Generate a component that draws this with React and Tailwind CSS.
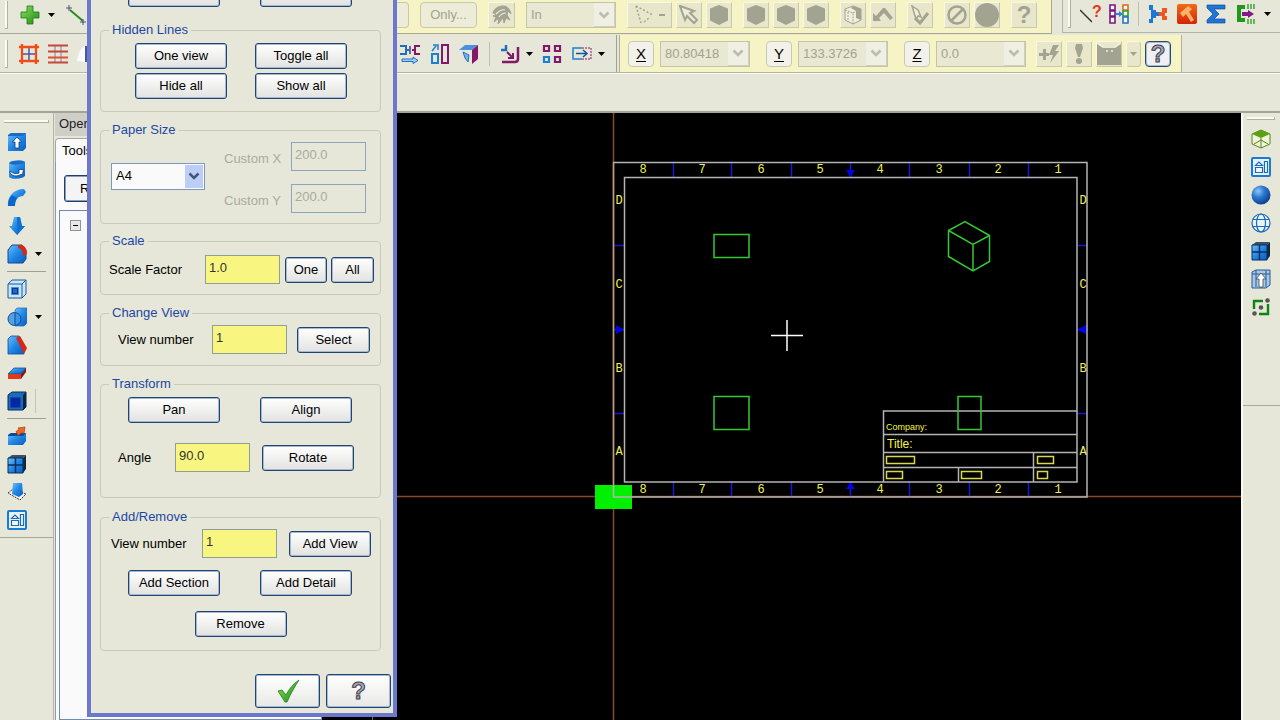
import React, { useState } from "react";

const Icon = ({ children }) => (
  <svg viewBox="0 0 20 20" className="block h-5 w-5 shrink-0">
    {children}
  </svg>
);

const Caret = () => (
  <svg viewBox="0 0 7 4" className="block h-1 w-[7px] shrink-0">
    <path d="M0 0h7L3.5 4z" fill="#000" />
  </svg>
);

const Chevron = ({ color }) => (
  <svg viewBox="0 0 12 8" className="h-2 w-3">
    <path d="M1.500 1.500 6 6l4.500-4.500" fill="none" stroke={color} strokeWidth="2.500" />
  </svg>
);

const QuestionMark = ({ className }) => (
  <span className={`text-2xl leading-6 font-bold ${className}`}>?</span>
);

const ToolButton = ({ label, children, className = "" }) => (
  <button type="button" aria-label={label} className={`flex shrink-0 items-center ${className}`}>
    {children}
  </button>
);

/* ---------- Icons shared by several toolbars ---------- */

const Defs = () => (
  <svg className="absolute h-0 w-0" aria-hidden="true">
    <defs>
      <linearGradient id="blue" x1="0" y1="0" x2="1" y2="1">
        <stop offset="0" stopColor="#6cc0f8" />
        <stop offset="0.5" stopColor="#1f86e4" />
        <stop offset="1" stopColor="#0a5cc0" />
      </linearGradient>
      <radialGradient id="ball" cx="0.35" cy="0.3" r="0.75">
        <stop offset="0" stopColor="#8cc8f8" />
        <stop offset="0.45" stopColor="#2a78d0" />
        <stop offset="1" stopColor="#0b3c88" />
      </radialGradient>
      <linearGradient id="green" x1="0" y1="0" x2="1" y2="1">
        <stop offset="0" stopColor="#8ae060" />
        <stop offset="1" stopColor="#1c8a14" />
      </linearGradient>
      <linearGradient id="fire" x1="0" y1="0" x2="0" y2="1">
        <stop offset="0" stopColor="#f06a18" />
        <stop offset="1" stopColor="#d42408" />
      </linearGradient>
    </defs>
  </svg>
);

const GridCube = () => (
  <Icon>
    <path d="M1 4 5 1h14l-3 3z" fill="#3a5064" />
    <path d="M16 4l3-3v14l-3 4z" fill="#12283c" />
    <path d="M1 4h15v15H1z" fill="url(#blue)" stroke="#0b2c5c" />
    <path d="M8.500 4v15M1 11h15" stroke="#0b2c5c" strokeWidth="1.500" />
  </Icon>
);

const LayoutIcon = () => (
  <Icon>
    <rect x="1" y="1" width="18" height="18" rx="1" fill="#e4f2fc" stroke="#1c7ad0" strokeWidth="2" />
    <path d="M4.500 10.500h7v5h-7zM13.500 4.500h3v11h-3zM4.500 8.500 8 5l3.500 3.500z" fill="#f4fafe" stroke="#1c6ab8" strokeWidth="1.200" />
  </Icon>
);

/* ---------- Left toolbar ---------- */

const ExtrudeIcon = () => (
  <Icon>
    <path d="M1 3l3-2h15v15l-3 3H1z" fill="url(#blue)" />
    <path d="M1 3l3-2h15l-3 3H1z" fill="#1a6cc8" />
    <path d="M10 5 5.500 10H8v6h4v-6h2.500z" fill="#fff" stroke="#0c3c78" strokeWidth="0.800" />
  </Icon>
);

const RevolveIcon = () => (
  <Icon>
    <path d="M2 3c3-3 13-3 16-1v14c-3 3-14 4-16 1z" fill="url(#blue)" />
    <path d="M2 3c3-3 13-3 16-1-3 3-13 4-16 1z" fill="#1a6cc8" />
    <path d="M3 11c3 3 7 3 9 2V9.500l4.500 0-1 5-2 0C10 17 5 16 3 13z" fill="#fff" stroke="#0c3c78" strokeWidth="0.800" />
  </Icon>
);

const SweepIcon = () => (
  <Icon>
    <path d="M1 18C0 9 6 1 17 1l2 3-3 4c-5 0-8 4-8 10H1z" fill="url(#blue)" />
    <path d="M1 18c0-4 1-8 4-11l5 3c-2 2-2 5-2 8z" fill="#0a66c8" />
  </Icon>
);

const LoftIcon = () => (
  <Icon>
    <path d="M7 1h6l2 9h3l-8 9-8-9h3z" fill="url(#blue)" />
    <path d="M10 1h3l2 9h3l-8 9z" fill="#0d72d0" />
  </Icon>
);

const FilletIcon = () => (
  <Icon>
    <path d="M1 6l4-5h10l4 5v9l-3 4H1z" fill="url(#blue)" stroke="#0b4c9c" />
    <path d="M11 1h4c3 1 5 4 5 9l-4 2c0-4-1-7-5-8z" fill="#d42818" />
  </Icon>
);

const ShellIcon = () => (
  <Icon>
    <path d="M1 5l4-4h14v14l-4 4H1z" fill="#c8e6fa" stroke="#1c5a9c" />
    <path d="M1 5h14v14M15 5l4-4" fill="none" stroke="#1c5a9c" />
    <path d="M4.500 8.500h7v7h-7z" fill="#0c3c88" stroke="#4a90d8" />
    <path d="M6 10h4v4H6z" fill="#1c6ad0" />
  </Icon>
);

const BooleanIcon = () => (
  <Icon>
    <path d="M8 3l2-2h10v15l-3 3H8z" fill="url(#blue)" stroke="#1c6ab8" strokeWidth="0.700" />
    <circle cx="7.500" cy="12" r="6.500" fill="#3a94e4" fillOpacity="0.850" stroke="#0b4c9c" />
    <path d="M8 6v12" stroke="#0b4c9c" />
  </Icon>
);

const DraftIcon = () => (
  <Icon>
    <path d="M1 4l3-3h8l5 18H1z" fill="url(#blue)" stroke="#0b4c9c" strokeWidth="0.800" />
    <path d="M9 3l4-2 7 12-3 6z" fill="#d42818" />
  </Icon>
);

const TrimIcon = () => (
  <Icon>
    <path d="M1 11l6-6h12l-5 6z" fill="url(#blue)" stroke="#0b3c78" strokeWidth="0.700" />
    <path d="M1 11h13v5H1z" fill="#e03a1c" />
    <path d="M14 11l5-6v4l-5 7z" fill="#7c1c28" />
  </Icon>
);

const SolidIcon = () => (
  <Icon>
    <path d="M1 4l4-3h14v15l-3 3H1z" fill="#1c6ab8" stroke="#0b2c5c" />
    <path d="M16 4l3-3v15l-3 3z" fill="#0b2440" />
    <path d="M3.500 6.500h10v10h-10z" fill="#0628a4" />
  </Icon>
);

const ImportIcon = () => (
  <Icon>
    <path d="M1 9l3-2h15v8l-3 4H1z" fill="url(#blue)" />
    <path d="M1 9l3-2h15l-3 3H1z" fill="#0c4c94" />
    <path d="M18 1l-7 1 1 1.500-3 2 2 4 4-3 2 1z" fill="#f06820" stroke="#b03c10" strokeWidth="0.700" />
  </Icon>
);

const SheetIcon = () => (
  <Icon>
    <path d="M1 11l5-4 13 5-6 6z" fill="#f4f4f4" stroke="#333" strokeDasharray="2 1" />
    <path d="M6 1h9l1 11-4 3-7-3z" fill="url(#blue)" />
  </Icon>
);

const leftTools = [
  [
    { label: "Extrude", icon: <ExtrudeIcon /> },
    { label: "Revolve", icon: <RevolveIcon /> },
    { label: "Sweep", icon: <SweepIcon /> },
    { label: "Loft", icon: <LoftIcon /> },
    { label: "Fillet", icon: <FilletIcon />, menu: true },
  ],
  [
    { label: "Shell", icon: <ShellIcon /> },
    { label: "Boolean", icon: <BooleanIcon />, menu: true },
    { label: "Draft", icon: <DraftIcon /> },
    { label: "Trim", icon: <TrimIcon /> },
    { label: "Solid", icon: <SolidIcon /> },
  ],
  [
    { label: "Import", icon: <ImportIcon /> },
    { label: "Grid cube", icon: <GridCube /> },
    { label: "Sheet", icon: <SheetIcon /> },
    { label: "Layout", icon: <LayoutIcon /> },
  ],
];

const LeftToolbar = () => (
  <nav className="w-[54px] shrink-0 border-r border-[#b4b4a4]">
    <div className="flex flex-col border-b border-[#a8a898] pt-[7px] pb-[3px]">
      <div className="mx-1 mb-[5px] h-[3px] border-r border-b border-[#b0b09c] bg-[#fafaf0]" />
      {leftTools.map((group, index) => (
        <div key={index} className="flex flex-col">
          {index > 0 && <div className="mx-[7px] my-[3px] h-px bg-[#a0a090]" />}
          {group.map((tool) => (
            <ToolButton key={tool.label} label={tool.label} className="h-7 gap-2 pl-[7px]">
              {tool.icon}
              {tool.menu && <Caret />}
              {tool.label === "Solid" && <span className="h-6 w-px bg-[#c4c4b0]" />}
            </ToolButton>
          ))}
        </div>
      ))}
    </div>
  </nav>
);

/* ---------- Right toolbar ---------- */

const rightTools = [
  {
    label: "Isometric",
    icon: (
      <Icon>
        <path d="M1 5l9-4 9 4v10l-9 4-9-4z" fill="#f0f4dc" stroke="#5c8418" />
        <path d="M1 5l9-4 9 4-9 4z" fill="#5ca014" />
        <path d="M10 9v10M3 15l7-4 7 4" fill="none" stroke="#5c8418" />
      </Icon>
    ),
  },
  { label: "View layout", icon: <LayoutIcon /> },
  {
    label: "Shaded",
    icon: (
      <Icon>
        <circle cx="10" cy="10" r="9.500" fill="url(#ball)" />
      </Icon>
    ),
  },
  {
    label: "Wireframe",
    icon: (
      <Icon>
        <g fill="none" stroke="#1c6ab8" strokeWidth="1.200">
          <circle cx="10" cy="10" r="9" fill="#e8f4fc" />
          <ellipse cx="10" cy="10" rx="4.500" ry="9" />
          <path d="M2 6.500h16M1.500 13.500h17" />
        </g>
      </Icon>
    ),
  },
  { label: "Solid cube", icon: <GridCube /> },
  {
    label: "Raise",
    icon: (
      <Icon>
        <path d="M1 3l4-2h14v15l-4 3H1z" fill="#a4c8e8" stroke="#2c5c94" />
        <path d="M5 1v17M15 1v17M1 5h18" stroke="#2c5c94" />
        <path d="M10 4 5 10h3v8h4v-8h3z" fill="#fff" stroke="#444" strokeWidth="0.800" />
      </Icon>
    ),
  },
  {
    label: "Fit",
    icon: (
      <Icon>
        <path d="M3 12V4h9M17 7v10H8" fill="none" stroke="#0c8414" strokeWidth="2.400" />
        <circle cx="10" cy="10.500" r="2.300" fill="#555" />
        <circle cx="16.500" cy="3.500" r="2.300" fill="#555" />
        <circle cx="3.500" cy="16.500" r="2.300" fill="#555" />
      </Icon>
    ),
  },
];

const RightToolbar = () => (
  <nav className="w-[39px] shrink-0 border-l-2 border-[#fafaf2]">
    <div className="flex h-[293px] flex-col items-center border-b border-[#a8a898] pt-1 pr-[2px]">
      <div className="mb-[5px] h-[3px] w-7 border-r border-b border-[#b0b09c] bg-[#fafaf0]" />
      {rightTools.map((tool) => (
        <ToolButton key={tool.label} label={tool.label} className="h-7">
          {tool.icon}
        </ToolButton>
      ))}
    </div>
  </nav>
);

/* ---------- Top toolbars ---------- */

const Grip = () => <div className="h-7 w-[3px] shrink-0 border-r border-b border-[#b0b09c] bg-[#fafaf0]" />;

const Separator = () => <div className="h-6 w-px shrink-0 bg-[#c0c0ac]" />;

const GhostButton = ({ label, children, className = "w-[26px]" }) => (
  <button
    type="button"
    disabled
    aria-label={label}
    className={`flex h-[26px] shrink-0 items-center justify-center border border-r-[#c8c8aa] border-b-[#c8c8aa] border-t-[#f8f8e4] border-l-[#f8f8e4] bg-[#e8e7cc] text-[#a2a390] ${className}`}
  >
    {children}
  </button>
);

const GhostSelect = ({ label, value }) => (
  <div className="relative h-[26px] w-[90px] shrink-0">
    <select
      disabled
      aria-label={label}
      className="h-full w-full appearance-none border border-[#c4c4a8] bg-[#e9e8d2] pl-1 text-[13px] text-[#a2a390] opacity-100"
    >
      <option>{value}</option>
    </select>
    <span className="pointer-events-none absolute top-px right-px flex h-6 w-[21px] items-center justify-center border-r border-b border-[#d0d0bc] bg-[#efefe4]">
      <Chevron color="#bcbcaa" />
    </span>
  </div>
);

const AxisButton = ({ axis }) => (
  <button
    type="button"
    className="h-[26px] w-[26px] shrink-0 rounded-sm border border-[#c8c8b4] bg-[#f2f2ea] text-[15px] leading-5 text-black underline underline-offset-2"
  >
    {axis}
  </button>
);

const GhostHex = () => (
  <Icon>
    <path d="M10 0l9 3.500v12L10 20l-9-4.500v-12z" fill="currentColor" />
  </Icon>
);

const SelectionBar = () => (
  <div className="flex h-[34px] shrink-0 items-start gap-[11px] border-r border-b border-[#a8a890] bg-[#f6f4c4] pt-[2px] pr-[14px]">
    <div className="h-[26px] w-3 rounded-r-sm border border-l-0 border-[#c8c8aa] bg-[#edecd8]" />
    <button
      type="button"
      disabled
      className="h-[26px] w-[57px] rounded-sm border border-[#c8c8aa] bg-[#edecd8] text-[13px] text-[#a2a390]"
    >
      Only...
    </button>
    <GhostButton label="Mask" className="w-[27px]">
      <Icon>
        <path
          d="M1 8c1-4 5-7 10-7 4 0 7 3 8 8l-3-3-1 4 3 5-4-2-2 5-1-5-5 6 1-6-5 4 2-5-3-1 4-2z"
          fill="currentColor"
          stroke="currentColor"
        />
        <path d="M4 9c4-4 6-5 9-4M7 12c2-3 4-4 7-4" fill="none" stroke="#eeeeda" strokeWidth="1.200" />
      </Icon>
    </GhostButton>
    <GhostSelect label="Selection window" value="In" />
    <div className="flex gap-1">
      <GhostButton label="Polygon" className="w-[45px] gap-1">
        <Icon>
          <path d="M1 1l5 17M1 1l17 9M9 17l5-4" fill="none" stroke="currentColor" strokeWidth="1.500" strokeDasharray="2 2" />
        </Icon>
        <span className="h-[2px] w-[6px] bg-[#a2a390]" />
      </GhostButton>
      <GhostButton label="Pointer">
        <Icon>
          <path d="M1 1l14 5-4 2 7 7-3 3-7-7-2 4z" fill="#eeeeda" stroke="currentColor" strokeWidth="2" />
        </Icon>
      </GhostButton>
      <GhostButton label="Solid face">
        <GhostHex />
      </GhostButton>
    </div>
    <div className="flex gap-1">
      <GhostButton label="Edge">
        <GhostHex />
      </GhostButton>
      <GhostButton label="Face">
        <GhostHex />
      </GhostButton>
      <GhostButton label="Body">
        <GhostHex />
      </GhostButton>
    </div>
    <div className="flex gap-1">
      <GhostButton label="From back">
        <Icon>
          <path d="M10 1l8 3v11l-8 4-8-4V4z" fill="#f0f0dc" stroke="currentColor" />
          <path d="M10 1l8 3v11l-5-2V6L8 3z" fill="currentColor" />
          <path d="M2 5l8 3v11M10 8l4-2M5 7v10" fill="none" stroke="currentColor" strokeDasharray="2 1" />
        </Icon>
      </GhostButton>
      <GhostButton label="Select last">
        <Icon>
          <path d="M0 8v8h8l-2-3 5-5 6 7 3-2-8-10h-2L3 11z" fill="currentColor" />
        </Icon>
      </GhostButton>
    </div>
    <GhostButton label="Verify">
      <Icon>
        <path d="M2 1l6 4 3 7-3-1-2 3z" fill="#f0f0dc" stroke="currentColor" strokeWidth="1.500" />
        <path d="M5 13l5 5 8-10" fill="none" stroke="currentColor" strokeWidth="3" />
      </Icon>
    </GhostButton>
    <div className="flex gap-1">
      <GhostButton label="Unselect">
        <Icon>
          <circle cx="10" cy="10" r="8.500" fill="none" stroke="currentColor" strokeWidth="2.500" />
          <path d="M4 16 16 4" stroke="currentColor" strokeWidth="2.500" />
        </Icon>
      </GhostButton>
      <GhostButton label="End selection">
        <svg viewBox="0 0 24 24" className="h-6 w-6 shrink-0">
          <circle cx="12" cy="12" r="12" fill="currentColor" />
        </svg>
      </GhostButton>
    </div>
    <GhostButton label="Selection help">
      <QuestionMark className="text-[#a2a390]" />
    </GhostButton>
  </div>
);

const AnalyzeBar = () => (
  <div className="ml-[10px] flex h-[33px] grow items-center gap-[9px] border-b border-l border-[#b4b4a4] pb-1 pl-[5px]">
    <Grip />
    <ToolButton label="Analyze entity">
      <svg viewBox="0 0 12 20" className="h-5 w-3">
        <path d="M0 6l12 12" stroke="#333" strokeWidth="1.500" />
      </svg>
      <span className="w-2 pb-1 text-base leading-4 font-bold text-[#e03818]">?</span>
    </ToolButton>
    <ToolButton label="Change attributes">
      <Icon>
        <g fill="#fff" strokeWidth="1.600">
          <path d="M1 1h5v5H1zM1 7h5v5H1zM1 13h5v6H1z" stroke="#7c1480" />
          <path d="M14 1h5v5h-5z" stroke="#e06818" />
          <path d="M14 7h5v5h-5z" stroke="#20a030" />
          <path d="M14 13h5v6h-5z" stroke="#2070d0" />
        </g>
        <path d="M7 9h3V7l4 3-4 3v-2H7z" fill="#2c80d8" />
      </Icon>
    </ToolButton>
    <Separator />
    <ToolButton label="Join">
      <Icon>
        <path d="M1 1h4v5h3v2h3v4H8v2H5v5H1v-4h2V6H1z" fill="#1c78d8" />
        <path d="M19 4h-5v4h-3v4h3v4h5v-4h-2V9h2z" fill="#f05820" />
      </Icon>
    </ToolButton>
    <ToolButton label="Hammer">
      <Icon>
        <rect width="20" height="20" rx="2" fill="url(#fire)" />
        <path d="M3 9l8-7 4 3-3 3 5 8-3 2-5-8-3 3z" fill="#fcb468" />
      </Icon>
    </ToolButton>
    <ToolButton label="Statistics">
      <Icon>
        <path d="M1 1h18v4H8l5 5-5 5h11v4H1v-3l6-6-6-6z" fill="#2074d4" stroke="#0c50a8" strokeWidth="0.700" />
      </Icon>
    </ToolButton>
    <ToolButton label="Export" className="gap-[9px]">
      <Icon>
        <path d="M10 3H4v13h6" fill="none" stroke="#20981c" strokeWidth="4" />
        <path d="M13 0v5M16 0v5M19 0v5M13 15v5M16 15v5M19 15v5" stroke="#20981c" strokeWidth="1.300" />
        <path d="M7 8h6V6l6 4-6 4v-2H7z" fill="#841888" />
      </Icon>
      <Caret />
    </ToolButton>
  </div>
);

const TransformBar = () => (
  <div className="flex h-full w-[220px] shrink-0 items-center justify-between border-r border-[#a0a090] pr-[11px] pl-[3px]">
    <ToolButton label="Stretch">
      <Icon>
        <path d="M0 2h6v8H0M6 6h3" fill="none" stroke="#1c70c0" strokeWidth="2" />
        <path d="M20 2h-5v8h5M15 6h-3" fill="none" stroke="#841868" strokeWidth="2" />
        <path d="M10 2v8" stroke="#6868a0" strokeWidth="2" />
        <path d="M2 15h11v-2l5 3.500-5 3v-2H2z" fill="#9cd0f8" stroke="#1c70c0" />
      </Icon>
    </ToolButton>
    <ToolButton label="Mirror">
      <Icon>
        <path d="M2 10h6v9H2z" fill="none" stroke="#1c80d0" strokeWidth="2" />
        <path d="M12 1h6v18h-6z" fill="none" stroke="#841868" strokeWidth="2" />
        <path d="M2 7l4-5M3 1h5v5" fill="none" stroke="#1c80d0" strokeWidth="1.500" />
      </Icon>
    </ToolButton>
    <ToolButton label="Project">
      <Icon>
        <path d="M0 6l6-5h13l-6 5z" fill="#4c90e0" />
        <path d="M13 6l6-5v14l-6 5z" fill="#841868" />
        <path d="M4 8l6 3-1 7-3-4z" fill="#6cb4ec" stroke="#2c70b8" />
      </Icon>
    </ToolButton>
    <Separator />
    <ToolButton label="Offset" className="gap-[6px]">
      <Icon>
        <path d="M1 6h5V1" fill="none" stroke="#1c70c0" strokeWidth="2.500" />
        <path d="M2 18h13c2 0 3-1 3-3V3" fill="none" stroke="#841868" strokeWidth="2.500" />
        <path d="M7 8l6 6M13 9v5H8" fill="none" stroke="#841868" strokeWidth="2" />
      </Icon>
      <Caret />
    </ToolButton>
    <ToolButton label="Array">
      <Icon>
        <g fill="none" strokeWidth="2.200">
          <path d="M2 2h5v5H2zM13 2h5v5h-5zM13 13h5v5h-5z" stroke="#841868" />
          <path d="M2 13h5v5H2z" stroke="#1c80d0" />
        </g>
      </Icon>
    </ToolButton>
    <ToolButton label="Drag" className="gap-[6px]">
      <Icon>
        <path d="M10 4H1v11h9" fill="none" stroke="#1c80d0" strokeWidth="1.500" />
        <path d="M10 4h9v11h-9" fill="none" stroke="#841868" strokeDasharray="2 1" />
        <path d="M4 9.500h10M11 6l4 3.500-4 3.500" fill="none" stroke="#1c5098" strokeWidth="1.500" />
      </Icon>
      <Caret />
    </ToolButton>
  </div>
);

const CoordinateBar = () => (
  <div className="ml-[2px] flex h-full shrink-0 items-center border-r border-l border-[#b0b09c] bg-[#f6f4c4] pr-[10px] pl-2">
    <div className="flex items-center gap-4">
      <div className="flex gap-[6px]">
        <AxisButton axis="X" />
        <GhostSelect label="X coordinate" value="80.80418" />
      </div>
      <div className="flex gap-[6px]">
        <AxisButton axis="Y" />
        <GhostSelect label="Y coordinate" value="133.3726" />
      </div>
      <div className="flex gap-[6px]">
        <AxisButton axis="Z" />
        <GhostSelect label="Z coordinate" value="0.0" />
      </div>
    </div>
    <div className="ml-[10px] flex gap-1">
      <GhostButton label="Fast point">
        <Icon>
          <path d="M0 9h4V5h3v4h3v3H7v4H4v-4H0zM14 1h6l-4 6h4l-9 12 3-8h-4z" fill="currentColor" />
        </Icon>
      </GhostButton>
      <GhostButton label="Priority">
        <Icon>
          <path d="M7 0h6l1 4-3 9H9L6 4z" fill="currentColor" />
          <circle cx="10" cy="17" r="3" fill="currentColor" />
        </Icon>
      </GhostButton>
      <GhostButton label="Auto cursor">
        <svg viewBox="0 0 24 24" className="h-6 w-6 shrink-0">
          <path d="M0 2l6 4h12l6-4v21H0z" fill="currentColor" />
          <path d="M1 1l5 4M23 1l-5 4M9 9h2M14 9h2" stroke="#f4f4e0" strokeWidth="1.500" />
        </svg>
      </GhostButton>
    </div>
    <GhostButton label="Cursor menu" className="mx-1 w-[15px] rounded-sm">
      <svg viewBox="0 0 7 4" className="h-1 w-[7px] shrink-0">
        <path d="M0 0h7L3.500 4z" fill="currentColor" />
      </svg>
    </GhostButton>
    <button
      type="button"
      aria-label="Cursor help"
      className="flex h-[26px] w-[26px] items-center justify-center rounded-sm border border-[#284878] bg-[#f0f0f4] inset-ring-1 inset-ring-[#a8b8d0]"
    >
      <QuestionMark className="text-[#a4a4b8] [-webkit-text-stroke:1px_#404048]" />
    </button>
  </div>
);

const TopToolbars = () => (
  <header className="shrink-0 border-b-2 border-[#a4a498]">
    <div className="flex h-[35px] items-start">
      <div className="flex h-[34px] w-[397px] shrink-0 items-start border-b border-[#a8a898] pt-[1px] pl-[5px]">
        <Grip />
        <div className="flex items-center pt-1">
          <ToolButton label="Create point" className="gap-2 pl-3">
            <Icon>
              <path d="M7 1h6v6h6v6h-6v6H7v-6H1V7h6z" fill="url(#green)" stroke="#1c7814" strokeWidth="0.800" />
            </Icon>
            <Caret />
          </ToolButton>
          <ToolButton label="Create line" className="pl-[11px]">
            <Icon>
              <path d="M4 5l13 11" stroke="#1c8c1c" strokeWidth="1.800" />
              <path d="M0 3h6M3 0v6M14 17h6M17 14v6" stroke="#4c4c80" />
            </Icon>
          </ToolButton>
        </div>
      </div>
      <SelectionBar />
      <AnalyzeBar />
    </div>
    <div className="flex h-[38px] items-center border-b border-[#b4b4a4]">
      <div className="flex w-[397px] shrink-0 items-center gap-[9px] pl-[5px]">
        <Grip />
        <ToolButton label="Grid" className="ml-[2px]">
          <Icon>
            <path d="M10 2v16M2 10h16" stroke="#4858a0" strokeWidth="1.500" />
            <path d="M0 3h20M0 17h20M3 0v20M17 0v20" stroke="#f04c18" strokeWidth="2.300" />
          </Icon>
        </ToolButton>
        <ToolButton label="Levels">
          <Icon>
            <path d="M7 2v17M13 2v17" stroke="#7880b8" />
            <path d="M0 1.500h20M0 7.500h20M0 18.500h20" stroke="#c84838" strokeWidth="2" />
            <path d="M0 13.500h20" stroke="#e0502c" strokeWidth="2" />
          </Icon>
        </ToolButton>
        <ToolButton label="Surface">
          <Icon>
            <path d="M0 17c1-8 4-13 8-15v16z" fill="#fafafa" />
            <path d="M8 2h10v16H8z" fill="#485898" />
          </Icon>
        </ToolButton>
      </div>
      <TransformBar />
      <CoordinateBar />
    </div>
    <div className="h-[38px] border-t border-[#fafaf2]" />
  </header>
);

/* ---------- Operations manager ---------- */

const ManagerPanel = () => (
  <aside className="flex w-[268px] shrink-0 flex-col pl-px">
    <h2 className="h-[23px] bg-[#cfcfc8] pl-1 text-[13px] leading-[22px] text-[#222]">Opera</h2>
    <div className="flex h-[26px] items-end">
      <button type="button" className="h-6 w-[66px] rounded-t-sm border border-b-0 border-[#a0a8a8] bg-[#fafafa] px-[6px] text-left text-[13px]">
        Tools
      </button>
    </div>
    <div className="flex grow flex-col border-l border-[#8c9ca8] bg-[#fafafa] pt-[13px] pl-[3px]">
      <button type="button" className="ml-[5px] h-[27px] w-[91px] rounded-[3px] border border-[#1f3f70] bg-[#f4f4f4] pl-[15px] text-left text-[13px] leading-5 inset-ring-1 inset-ring-[#8c9cb8]">
        Regen
      </button>
      <div className="mt-2 grow border border-[#6c8cb0] bg-[#fafafa] pt-[9px] pl-[10px]">
        <button
          type="button"
          aria-label="Collapse"
          className="flex h-[11px] w-[11px] items-center justify-center border border-[#8c94a0] bg-[#e8e8e4]"
        >
          <span className="h-px w-[5px] bg-black" />
        </button>
      </div>
    </div>
  </aside>
);

/* ---------- Drawing sheet ---------- */

const columns = [
  ["8", 643],
  ["7", 702],
  ["6", 761],
  ["5", 820],
  ["4", 880],
  ["3", 939],
  ["2", 998],
  ["1", 1058],
];

const rows = [
  ["D", 204],
  ["C", 288],
  ["B", 372],
  ["A", 455],
];

const DrawingCanvas = () => (
  <main className="min-w-0 grow bg-black">
    <svg viewBox="322 113 919 607" preserveAspectRatio="xMinYMin slice" className="block h-full w-full">
      <path d="M613.500 113v607M322 496.500h919" stroke="#8a4a20" strokeWidth="1.500" />
      <path d="M372.500 714v6" stroke="#20a020" />
      <rect x="595" y="485" width="37" height="24" fill="#00f000" />

      <g fill="none" stroke="#1818d0" strokeWidth="1.500">
        <path d="M673.500 162v15M731.500 162v15M791.500 162v15M850.500 162v15M909.500 162v15M969.500 162v15M1028.500 162v15" />
        <path d="M673.500 482v15M731.500 482v15M791.500 482v15M850.500 482v15M909.500 482v15M969.500 482v15M1028.500 482v15" />
        <path d="M614 245.500h10M614 329.500h10M614 413.500h10M1077 245.500h10M1077 329.500h10M1077 413.500h10" />
      </g>
      <path
        d="M846 170h9l-4.500 7zM846 489h9l-4.500-7zM616 325l8 4.500-8 4.500zM1086 325l-9 4.500 9 4.500z"
        fill="#0000f0"
      />

      <g fill="none" stroke="#b4b4b4" strokeWidth="1.500">
        <path d="M613.500 162.500h473.500v334.500H613.500z" />
        <path d="M624.500 177.500h452.500v304.500H624.500z" />
        <path d="M883.500 482v-71h193.500M883.500 434.500h193.500M883.500 452.500h193.500M883.500 467.500h193.500M1033.500 452v30M958.500 467v15" />
      </g>
      <path d="M613.500 162v323" stroke="#c49c70" />

      <g fill="#f0f050" textAnchor="middle" className="font-['Liberation_Mono',monospace] text-[12px]">
        {columns.map(([label, x]) => (
          <React.Fragment key={label}>
            <text x={x} y="173">{label}</text>
            <text x={x} y="493">{label}</text>
          </React.Fragment>
        ))}
        {rows.map(([label, y]) => (
          <React.Fragment key={label}>
            <text x="619" y={y}>{label}</text>
            <text x="1083" y={y}>{label}</text>
          </React.Fragment>
        ))}
      </g>

      <g fill="#f4f440" className="font-['Liberation_Sans',sans-serif]">
        <text x="886" y="430" className="text-[9px]">Company:</text>
        <text x="887" y="448" className="text-[12px]">Title:</text>
      </g>
      <g fill="none" stroke="#d8d84c" strokeWidth="1.500">
        <rect x="886.500" y="456.500" width="28" height="7" />
        <rect x="1037.500" y="456.500" width="16" height="7" />
        <rect x="886.500" y="471.500" width="16" height="7" />
        <rect x="961.500" y="471.500" width="20" height="7" />
        <rect x="1037.500" y="471.500" width="10" height="7" />
      </g>

      <g fill="none" stroke="#34c834" strokeWidth="1.500">
        <rect x="714" y="234.500" width="35" height="23" />
        <rect x="714" y="396.500" width="35" height="33" />
        <rect x="958" y="396.500" width="23" height="33" />
        <path d="M948.500 230.500l16.500-9 24.500 14v26l-16.500 9.500-24.500-14.500z" />
        <path d="M948.500 230.500l24.500 14 16.500-9M973 244.500v26.500" />
      </g>

      <path d="M787 320v31M771 335.500h32" stroke="#fff" strokeWidth="1.500" />
    </svg>
  </main>
);

/* ---------- Layout dialog ---------- */

const DialogButton = ({ children, className = "w-[92px]" }) => (
  <button
    type="button"
    className={`flex h-[26px] items-center justify-center rounded-[3px] border border-[#1f4478] bg-linear-to-b from-white to-[#e2e2e0] text-[13px] text-black inset-ring-1 inset-ring-[#a8b8cc] ${className}`}
  >
    {children}
  </button>
);

const Group = ({ title, children, className = "" }) => (
  <fieldset className={`rounded-[4px] border border-[#cacab8] ${className}`}>
    <legend className="ml-2 h-[18px] px-[3px] text-[13px] leading-[18px] text-[#1c48a4]">{title}</legend>
    {children}
  </fieldset>
);

const NumberInput = ({ id, value, onChange }) => (
  <input
    id={id}
    type="text"
    value={value}
    onChange={onChange}
    className="h-[29px] w-[75px] border border-[#8ca098] bg-[#f8f680] px-[3px] pb-1 text-[13px] text-[#333] outline-none"
  />
);

const LayoutDialog = () => {
  const [paper, setPaper] = useState("A4");
  const [values, setValues] = useState({ scale: "1.0", view: "1", angle: "90.0", addView: "1" });

  const update = (key) => (e) => setValues({ ...values, [key]: e.target.value });

  return (
    <form
      role="dialog"
      aria-label="Solid drawing layout"
      className="absolute -top-[19px] left-[87px] w-[310px] border-4 border-t-0 border-[#6c78cc] bg-[#e6e7d8] pr-3 pb-[5px] pl-[9px]"
    >
      <div className="flex gap-10 pl-7">
        <DialogButton />
        <DialogButton />
      </div>

      <Group title="Hidden Lines" className="mt-[14px] pt-1 pb-3">
        <div className="grid grid-cols-[92px_92px] gap-x-7 gap-y-1 pl-[34px]">
          <DialogButton>One view</DialogButton>
          <DialogButton>Toggle all</DialogButton>
          <DialogButton>Hide all</DialogButton>
          <DialogButton>Show all</DialogButton>
        </div>
      </Group>

      <Group title="Paper Size" className="mt-[9px] pt-[3px] pb-[10px]">
        <div className="flex items-center justify-between pr-[14px] pl-[10px]">
          <div className="relative mb-[3px] h-[27px] w-[94px]">
            <select
              aria-label="Paper Size"
              value={paper}
              onChange={(e) => setPaper(e.target.value)}
              className="h-full w-full appearance-none border border-[#7c98c0] bg-[#fafafa] pl-1 text-[13px] text-black"
            >
              <option>A4</option>
              <option>A3</option>
            </select>
            <span className="pointer-events-none absolute top-[2px] right-[2px] flex h-[23px] w-[18px] items-center justify-center bg-[#bccdf6]">
              <Chevron color="#445480" />
            </span>
          </div>
          <div className="grid grid-cols-[67px_75px] items-center gap-y-[13px] text-[13px] text-[#aaab9c]">
            <label htmlFor="custom-x" className="pt-1">Custom X</label>
            <input id="custom-x" disabled defaultValue="200.0" className="h-[29px] border border-[#8ca4bc] px-[3px] pb-1" />
            <label htmlFor="custom-y" className="pt-1">Custom Y</label>
            <input id="custom-y" disabled defaultValue="200.0" className="h-[29px] border border-[#8ca4bc] px-[3px] pb-1" />
          </div>
        </div>
      </Group>

      <Group title="Scale" className="mt-2 pt-[5px] pb-[10px]">
        <div className="flex items-center pl-2">
          <label htmlFor="scale" className="w-24 text-[13px]">Scale Factor</label>
          <NumberInput id="scale" value={values.scale} onChange={update("scale")} />
          <div className="ml-[5px] flex gap-1">
            <DialogButton className="w-[42px]">One</DialogButton>
            <DialogButton className="w-[43px]">All</DialogButton>
          </div>
        </div>
      </Group>

      <Group title="Change View" className="mt-[9px] pt-[3px] pb-[11px]">
        <div className="flex items-center pl-[17px]">
          <label htmlFor="view" className="w-[94px] text-[13px]">View number</label>
          <NumberInput id="view" value={values.view} onChange={update("view")} />
          <DialogButton className="ml-[10px] w-[73px]">Select</DialogButton>
        </div>
      </Group>

      <Group title="Transform" className="mt-[9px] pt-1 pb-[25px]">
        <div className="flex gap-10 pl-[27px]">
          <DialogButton>Pan</DialogButton>
          <DialogButton>Align</DialogButton>
        </div>
        <div className="mt-5 flex items-center pl-[17px]">
          <label htmlFor="angle" className="w-[57px] text-[13px]">Angle</label>
          <NumberInput id="angle" value={values.angle} onChange={update("angle")} />
          <DialogButton className="ml-3 w-[92px]">Rotate</DialogButton>
        </div>
      </Group>

      <Group title="Add/Remove" className="mt-[10px] pt-[3px] pb-[13px]">
        <div className="flex items-center pl-[10px]">
          <label htmlFor="add-view" className="w-[91px] text-[13px]">View number</label>
          <NumberInput id="add-view" value={values.addView} onChange={update("addView")} />
          <DialogButton className="ml-3 w-[82px]">Add View</DialogButton>
        </div>
        <div className="mt-3 flex gap-10 pl-[27px]">
          <DialogButton>Add Section</DialogButton>
          <DialogButton>Add Detail</DialogButton>
        </div>
        <div className="mt-[15px] flex justify-center">
          <DialogButton>Remove</DialogButton>
        </div>
      </Group>

      <div className="-mr-[10px] mt-[23px] flex justify-end gap-[6px]">
        <button
          type="button"
          aria-label="OK"
          className="flex h-[34px] w-[65px] items-center justify-center rounded-[3px] border border-[#1f4478] bg-linear-to-b from-white to-[#e8e8e6] inset-ring-1 inset-ring-[#a8b8cc]"
        >
          <svg viewBox="0 0 24 24" className="h-6 w-6">
            <path d="M2 12l4-1 4 5C13 10 17 5 23 1c-4 6-8 13-12 22H9z" fill="url(#green)" stroke="#1c8014" strokeWidth="0.800" />
          </svg>
        </button>
        <button
          type="button"
          aria-label="Help"
          className="flex h-[34px] w-[65px] items-center justify-center rounded-[3px] border border-[#1f4478] bg-linear-to-b from-white to-[#e8e8e6] inset-ring-1 inset-ring-[#a8b8cc]"
        >
          <QuestionMark className="text-[#a4a4b8] [-webkit-text-stroke:1px_#404048]" />
        </button>
      </div>
    </form>
  );
};

const App = () => {
  return (
    <div className="relative flex h-screen flex-col overflow-hidden bg-[#e6e7d8] font-['Liberation_Sans',sans-serif] text-black">
      <Defs />
      <TopToolbars />
      <div className="flex min-h-0 grow">
        <LeftToolbar />
        <ManagerPanel />
        <DrawingCanvas />
        <RightToolbar />
      </div>
      <LayoutDialog />
    </div>
  );
};

export default App;
